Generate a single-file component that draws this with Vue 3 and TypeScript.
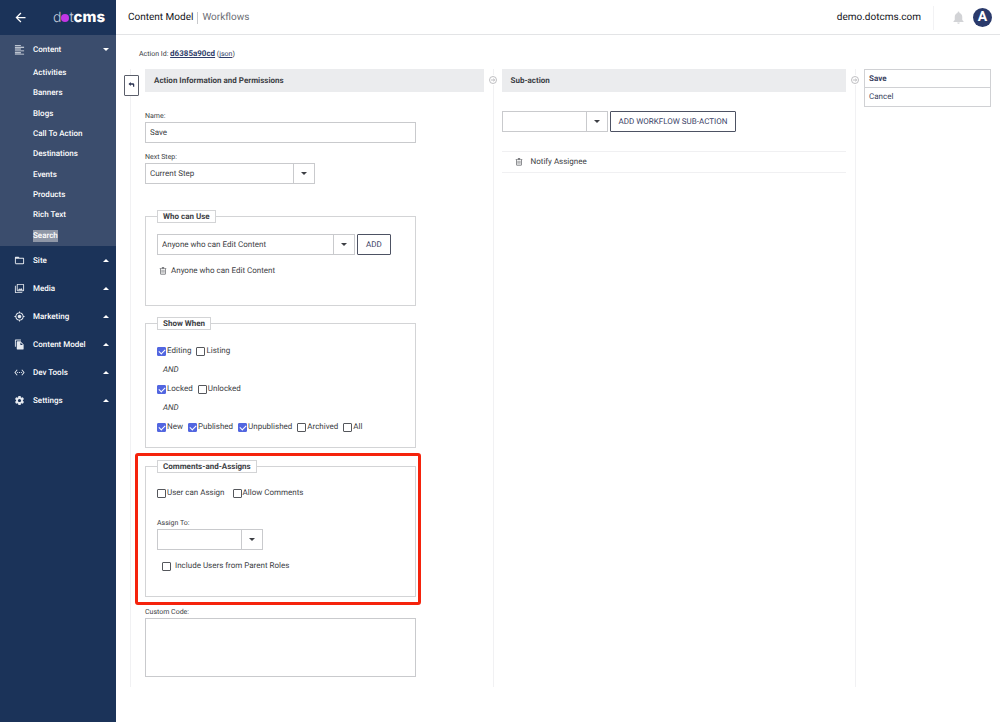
<script setup lang="ts">
import { ref } from 'vue'

interface NavGroup {
  label: string
  icon: string
}

const contentLinks: string[] = [
  'Activities',
  'Banners',
  'Blogs',
  'Call To Action',
  'Destinations',
  'Events',
  'Products',
  'Rich Text',
  'Search',
]
const activeLink = 'Search'

const groups: NavGroup[] = [
  {
    label: 'Site',
    icon: 'M20 6h-8l-2-2H4c-1.100 0-2 .9-2 2v12c0 1.100.9 2 2 2h16c1.100 0 2-.9 2-2V8c0-1.100-.9-2-2-2zm0 12H4V8h16v10z',
  },
  {
    label: 'Media',
    icon: 'M20 4v12H8V4h12m0-2H8c-1.100 0-2 .9-2 2v12c0 1.100.9 2 2 2h12c1.100 0 2-.9 2-2V4c0-1.100-.9-2-2-2zm-8.500 9.670l1.690 2.260 2.480-3.100L19 15H9zM2 6v14c0 1.100.9 2 2 2h14v-2H4V6H2z',
  },
  {
    label: 'Marketing',
    icon: 'M12 8c-2.210 0-4 1.790-4 4s1.790 4 4 4 4-1.790 4-4-1.790-4-4-4zm8.940 3A8.994 8.994 0 0 0 13 3.060V1h-2v2.060A8.994 8.994 0 0 0 3.060 11H1v2h2.060A8.994 8.994 0 0 0 11 20.940V23h2v-2.060A8.994 8.994 0 0 0 20.940 13H23v-2h-2.060zM12 19c-3.870 0-7-3.130-7-7s3.130-7 7-7 7 3.130 7 7-3.130 7-7 7z',
  },
  {
    label: 'Content Model',
    icon: 'M15 1H4c-1.100 0-2 .9-2 2v14h2V3h11V1zm0 5l6 6v9c0 1.100-.9 2-2 2H8c-1.100 0-2-.9-2-2V7c0-1.100.9-2 2-2h7zm-1 7h5.500L14 7.500V13z',
  },
  {
    label: 'Dev Tools',
    icon: 'M7.770 6.760L6.230 5.480.82 12l5.410 6.520 1.540-1.280L3.420 12l4.350-5.240zM7 13h2v-2H7v2zm10-2h-2v2h2v-2zm-6 2h2v-2h-2v2zm6.770-7.520l-1.540 1.280L20.580 12l-4.350 5.240 1.540 1.280L23.180 12l-5.410-6.520z',
  },
  {
    label: 'Settings',
    icon: 'M19.430 12.980c.04-.32.07-.64.07-.98s-.03-.66-.07-.98l2.110-1.650c.19-.15.24-.42.12-.64l-2-3.460c-.12-.22-.39-.3-.61-.22l-2.490 1c-.52-.4-1.080-.73-1.690-.98l-.38-2.650A.488.488 0 0 0 14 2h-4c-.25 0-.46.18-.49.42l-.38 2.650c-.61.25-1.170.59-1.690.98l-2.490-1c-.23-.09-.49 0-.61.22l-2 3.460c-.13.22-.07.49.12.64l2.110 1.650c-.04.32-.07.65-.07.98s.03.66.07.98l-2.110 1.650c-.19.15-.24.42-.12.64l2 3.460c.12.22.39.3.61.22l2.490-1c.52.4 1.080.73 1.690.98l.38 2.650c.03.24.24.42.49.42h4c.25 0 .46-.18.49-.42l.38-2.650c.61-.25 1.170-.59 1.690-.98l2.490 1c.23.09.49 0 .61-.22l2-3.460c.12-.22.07-.49-.12-.64l-2.110-1.650zM12 15.500c-1.930 0-3.500-1.570-3.500-3.500s1.570-3.500 3.500-3.500 3.500 1.570 3.500 3.500-1.570 3.500-3.500 3.500z',
  },
]

const trashPath =
  'M8.500 1h7v2.500H22v2h-2V20a2.500 2.500 0 0 1-2.500 2.500h-11A2.500 2.500 0 0 1 4 20V5.500H2v-2h6.500zM6 5.500V20q0 .5.5.5h11q.5 0 .5-.5V5.500zM8 8.500h1.500v9H8zm3.250 0h1.500v9h-1.500zm3.250 0H16v9h-1.500z'

const actionName = ref('Save')
const customCode = ref('')
const showWhen = ref([
  [
    { label: 'Editing', checked: true },
    { label: 'Listing', checked: false },
  ],
  [
    { label: 'Locked', checked: true },
    { label: 'Unlocked', checked: false },
  ],
  [
    { label: 'New', checked: true },
    { label: 'Published', checked: true },
    { label: 'Unpublished', checked: true },
    { label: 'Archived', checked: false },
    { label: 'All', checked: false },
  ],
])
const assigns = ref([
  { label: 'User can Assign', checked: false },
  { label: 'Allow Comments', checked: false },
])
const parentRoles = ref(false)
</script>

<template>
  <div class="app">
    <aside class="sidebar">
      <div class="brand">
        <button class="back" type="button" aria-label="Collapse menu">
          <svg viewBox="0 0 24 24"><path d="M20 11H7.830l5.590-5.590L12 4l-8 8 8 8 1.410-1.410L7.830 13H20v-2z" /></svg>
        </button>
        <div class="logo"><span class="thin">d</span><i class="dot"></i><span class="thin">t</span><b>cms</b></div>
      </div>
      <nav>
        <div class="open-group">
          <button class="group" type="button">
            <svg class="group-icon" viewBox="0 0 24 24"><path d="M2 2h13v2H2zM2 6h20v2H2zM2 10h13v2H2zM2 14h20v2H2zM2 18h13v2H2zM2 21h20v2H2z" /></svg>
            <span class="group-label">Content</span>
            <svg class="chev" viewBox="0 0 6 3"><path d="M0 0h6L3 3z" /></svg>
          </button>
          <ul class="links">
            <li v-for="link in contentLinks" :key="link">
              <a href="#" :class="{ active: link === activeLink }">{{ link }}</a>
            </li>
          </ul>
        </div>
        <button v-for="group in groups" :key="group.label" class="group" type="button">
          <svg class="group-icon" viewBox="0 0 24 24"><path fill-rule="evenodd" :d="group.icon" /></svg>
          <span class="group-label">{{ group.label }}</span>
          <svg class="chev" viewBox="0 0 6 3"><path d="M0 3h6L3 0z" /></svg>
        </button>
      </nav>
    </aside>

    <div class="page">
      <header class="topbar">
        <span class="crumb">Content Model</span>
        <span class="crumb current">Workflows</span>
        <span class="host">demo.dotcms.com</span>
        <button class="bell" type="button" aria-label="Notifications">
          <svg viewBox="0 0 24 24"><path d="M12 22c1.100 0 2-.9 2-2h-4c0 1.100.9 2 2 2zm6-6v-5c0-3.070-1.640-5.640-4.500-6.320V4a1.500 1.500 0 0 0-3 0v.68C7.630 5.360 6 7.920 6 11v5l-2 2v1h16v-1l-2-2z" /></svg>
        </button>
        <button class="avatar" type="button">A</button>
      </header>

      <main>
        <p class="action-id">Action Id: <a class="hash" href="#">d6385a90cd</a> (<a href="#">json</a>)</p>

        <div class="columns">
          <section class="column first">
            <button class="return" type="button" aria-label="Go back">
              <svg viewBox="0 0 12 10"><path d="M4.500 0v2.500H9Q11.500 2.500 11.500 5v4.500H9V6.500Q9 5.500 8 5.500H4.500V8L0 4z" /></svg>
            </button>
            <h2>Action Information and Permissions</h2>
            <form class="form" @submit.prevent>
              <label class="label" for="name">Name:</label>
              <input id="name" v-model="actionName" class="field" type="text" />

              <label class="label next" for="step">Next Step:</label>
              <span class="combo step">
                <select id="step"><option>Current Step</option></select>
              </span>

              <fieldset class="who">
                <legend>Who can Use</legend>
                <div class="row">
                  <span class="combo wide">
                    <select aria-label="Who can use"><option>Anyone who can Edit Content</option></select>
                  </span>
                  <button class="outline" type="button">ADD</button>
                </div>
                <div class="entry">
                  <button class="trash" type="button" aria-label="Remove">
                    <svg viewBox="0 0 24 24"><path fill-rule="evenodd" :d="trashPath" /></svg>
                  </button>
                  <span>Anyone who can Edit Content</span>
                </div>
              </fieldset>

              <fieldset class="when">
                <legend>Show When</legend>
                <template v-for="(line, i) in showWhen" :key="i">
                  <em v-if="i > 0" class="and">AND</em>
                  <div class="checks">
                    <label v-for="item in line" :key="item.label">
                      <input v-model="item.checked" type="checkbox" />{{ item.label }}
                    </label>
                  </div>
                </template>
              </fieldset>

              <div class="highlight">
                <fieldset class="assigns">
                  <legend>Comments-and-Assigns</legend>
                  <div class="checks roomy">
                    <label v-for="item in assigns" :key="item.label">
                      <input v-model="item.checked" type="checkbox" />{{ item.label }}
                    </label>
                  </div>
                  <label class="label assign-label" for="assign">Assign To:</label>
                  <span class="combo small">
                    <select id="assign"><option></option></select>
                  </span>
                  <div class="checks nested">
                    <label><input v-model="parentRoles" type="checkbox" />Include Users from Parent Roles</label>
                  </div>
                </fieldset>
              </div>

              <label class="label" for="code">Custom Code:</label>
              <textarea id="code" v-model="customCode"></textarea>
            </form>
          </section>

          <section class="column">
            <span class="marker"><svg viewBox="0 0 16 16"><circle cx="8" cy="8" r="7" /><path d="M4 8h7M8.500 5.500L11.500 8l-3 2.500" /></svg></span>
            <h2>Sub-action</h2>
            <div class="row add-sub">
              <span class="combo small">
                <select aria-label="Sub-action"><option></option></select>
              </span>
              <button class="outline" type="button">ADD WORKFLOW SUB-ACTION</button>
            </div>
            <div class="sub">
              <button class="trash" type="button" aria-label="Remove sub-action">
                <svg viewBox="0 0 24 24"><path fill-rule="evenodd" :d="trashPath" /></svg>
              </button>
              <span>Notify Assignee</span>
            </div>
          </section>

          <section class="column">
            <span class="marker"><svg viewBox="0 0 16 16"><circle cx="8" cy="8" r="7" /><path d="M4 8h7M8.500 5.500L11.500 8l-3 2.500" /></svg></span>
            <div class="commands">
              <button class="save" type="button">Save</button>
              <button type="button">Cancel</button>
            </div>
          </section>
        </div>
      </main>
    </div>
  </div>
</template>

<style>
body {
  background: #fff;
}
</style>

<style scoped>
.app,
.app * {
  box-sizing: border-box;
}
.app {
  display: flex;
  min-height: 100vh;
  font: 400 8px/12px Roboto, sans-serif;
  text-rendering: geometricPrecision;
  color: #3c3e44;
}
button,
input,
select,
textarea {
  font: inherit;
  color: inherit;
  text-rendering: inherit;
  margin: 0;
}
button {
  padding: 0;
  border: 0;
  background: none;
}
svg {
  display: block;
}

/* Sidebar */
.sidebar {
  flex: 0 0 116px;
  background: #1b3359;
  color: #fff;
}
.brand {
  display: flex;
  align-items: center;
  justify-content: space-between;
  height: 35px;
  padding: 0 11px 0 13px;
}
.back svg {
  width: 15px;
  height: 15px;
  fill: #fff;
}
.logo {
  display: flex;
  align-items: baseline;
  font: 400 15px/20px Inter, sans-serif;
}
.logo .thin {
  font-size: 14px;
  font-weight: 300;
  color: #c6cddb;
}
.logo b {
  font-weight: 800;
}
.logo .dot {
  width: 8px;
  height: 8px;
  border-radius: 50%;
  background: #c336e5;
}
.open-group {
  background: #3b4d6d;
}
.group {
  display: flex;
  align-items: center;
  width: 100%;
  height: 28px;
  padding: 0 7px 0 14px;
  font-weight: 500;
  text-align: left;
}
.group-icon {
  width: 11px;
  height: 11px;
  margin-right: 8px;
  fill: #e6eaf0;
}
.group-label {
  flex: 1;
  padding-top: 1px;
}
.chev {
  width: 6px;
  height: 3px;
  fill: #fff;
}
.links {
  display: grid;
  grid-auto-rows: 1fr;
  align-items: center;
  min-height: 183px;
  margin: 0;
  padding: 0 0 0 33px;
  list-style: none;
  font-weight: 500;
}
.links a {
  display: inline-block;
  color: #fff;
  text-decoration: none;
}
.links .active {
  background: #8f97a7;
}

/* Top bar */
.page {
  flex: 1;
  min-width: 0;
}
.topbar {
  display: flex;
  align-items: center;
  height: 35px;
  padding: 1px 8px 0 12px;
  border-bottom: 1px solid #e3e4e6;
  font-size: 10px;
  line-height: 12px;
  color: #14151a;
}
.crumb.current {
  margin-left: 4px;
  padding-left: 4px;
  border-left: 1px solid #c8c9cc;
  color: #6b6d73;
}
.host {
  margin-left: auto;
  padding-right: 12px;
  border-right: 1px solid #f2f2f4;
  line-height: 24px;
}
.bell {
  margin: 0 7px 0 17px;
}
.bell svg {
  width: 15px;
  height: 15px;
  fill: #d2d3d6;
}
.avatar {
  width: 19px;
  height: 19px;
  border-radius: 50%;
  background: #2a3a6b;
  color: #fff;
  font-size: 14px;
  font-weight: 700;
  line-height: 19px;
}

/* Columns */
.action-id {
  margin: 13px 0 9px 23px;
  font-size: 7px;
}
.action-id a {
  color: #2f3e6b;
}
.action-id .hash {
  font-size: 8px;
  font-weight: 700;
}
.columns {
  display: grid;
  grid-template-columns: 5fr 5fr 2fr;
  min-height: 618px;
  margin-left: 14px;
}
.column {
  position: relative;
  padding: 0 9px 0 8px;
  border-left: 1px solid #f1f1f3;
}
.column.first {
  padding-left: 14px;
}
h2 {
  margin: 0;
  padding: 0 9px;
  background: #ebecee;
  font-size: 8px;
  font-weight: 700;
  line-height: 23px;
}
.return {
  position: absolute;
  top: 6px;
  left: -7px;
  display: grid;
  justify-items: center;
  align-content: start;
  width: 15px;
  height: 21px;
  padding-top: 6px;
  border: 1px solid #5b5f6b;
  border-radius: 1px;
  background: #fff;
}
.return svg {
  width: 7px;
  height: 5px;
  fill: #2a3352;
}
.marker {
  position: absolute;
  top: 6px;
  left: -5px;
  padding: 1px 0;
  background: #fff;
}
.marker svg {
  width: 8px;
  height: 8px;
  fill: none;
  stroke: #a9aaae;
  stroke-width: 1.500;
}

/* Form */
.form {
  max-width: 271px;
  padding-top: 18px;
}
.label {
  display: block;
  font-size: 7px;
  line-height: 12px;
}
.next {
  margin-top: 8px;
}
.field,
textarea {
  display: block;
  width: 100%;
  border: 1px solid #c9cacd;
  border-radius: 0;
  background: #fff;
  outline: 0;
  padding: 0 4px;
}
.field {
  height: 21px;
}
textarea {
  height: 59px;
  resize: none;
}
.combo {
  position: relative;
  display: block;
  height: 21px;
}
.combo select {
  display: block;
  width: 100%;
  height: 100%;
  padding: 0 22px 0 4px;
  border: 1px solid #c9cacd;
  border-radius: 0;
  background: #fff;
  appearance: none;
}
.combo::before {
  content: '';
  position: absolute;
  top: 0;
  bottom: 0;
  right: 21px;
  border-left: 1px solid #c9cacd;
}
.combo::after {
  content: '';
  position: absolute;
  top: 9px;
  right: 8px;
  border: 3px solid transparent;
  border-top-color: #3c3e44;
  border-bottom: 0;
}
.step {
  width: 170px;
}
.wide {
  width: 198px;
}
.small {
  width: 106px;
}
.row {
  display: flex;
  gap: 2px;
}
.outline {
  height: 21px;
  padding: 0 8px;
  border: 1px solid #4d5263;
  border-radius: 1px;
  color: #3a4266;
}
fieldset {
  min-width: 0;
  margin: 0;
  padding: 0 11px;
  border: 1px solid #d3d4d6;
}
legend {
  padding: 0 5px;
  border: 1px solid #d3d4d6;
  font-weight: 700;
  line-height: 11px;
}
.who {
  margin-top: 26px;
  padding-top: 11px;
  padding-bottom: 28px;
}
.entry {
  display: flex;
  align-items: center;
  gap: 4px;
  margin-top: 10px;
  padding-left: 2px;
}
.trash svg {
  width: 8px;
  height: 8px;
  fill: #55575c;
}
.when {
  margin-top: 11px;
  padding-top: 15px;
  padding-bottom: 14px;
}
.and {
  display: block;
  margin: 7px 0 7px 6px;
}
.checks {
  display: flex;
  gap: 5px;
}
.checks label {
  display: flex;
  align-items: center;
  gap: 1px;
}
.checks input {
  position: relative;
  width: 9px;
  height: 9px;
  border: 1px solid #55575c;
  border-radius: 1px;
  background: #fff;
  appearance: none;
}
.checks input:checked {
  border-color: #5266e0;
  background: #5266e0;
}
.checks input:checked::after {
  content: '';
  position: absolute;
  top: 1px;
  left: 1px;
  width: 5px;
  height: 3px;
  border: 1px solid #fff;
  border-width: 0 0 1px 1px;
  transform: rotate(-45deg);
}
.roomy {
  gap: 8px;
}
.nested {
  margin-top: 10px;
  padding-left: 5px;
}
.nested label {
  gap: 4px;
}
.highlight {
  position: relative;
  margin-top: 12px;
  margin-bottom: 9px;
}
.highlight::after {
  content: '';
  position: absolute;
  inset: -7px -5px -8px -10px;
  border: 3px solid #f5230c;
  border-radius: 3px;
  pointer-events: none;
}
.assigns {
  padding-top: 14px;
  padding-bottom: 24px;
}
.assign-label {
  margin-top: 18px;
}

/* Sub-actions and commands */
.add-sub {
  margin-top: 19px;
}
.sub {
  display: flex;
  align-items: center;
  gap: 8px;
  height: 22px;
  margin-top: 19px;
  padding-left: 13px;
  border-top: 1px solid #f0f0f2;
  border-bottom: 1px solid #f0f0f2;
}
.commands {
  border: 1px solid #d0d1d4;
}
.commands button {
  display: block;
  width: 100%;
  height: 18px;
  padding: 0 4px;
  text-align: left;
  color: #3a4260;
}
.commands .save {
  border-bottom: 1px solid #d0d1d4;
  font-weight: 700;
}
</style>
